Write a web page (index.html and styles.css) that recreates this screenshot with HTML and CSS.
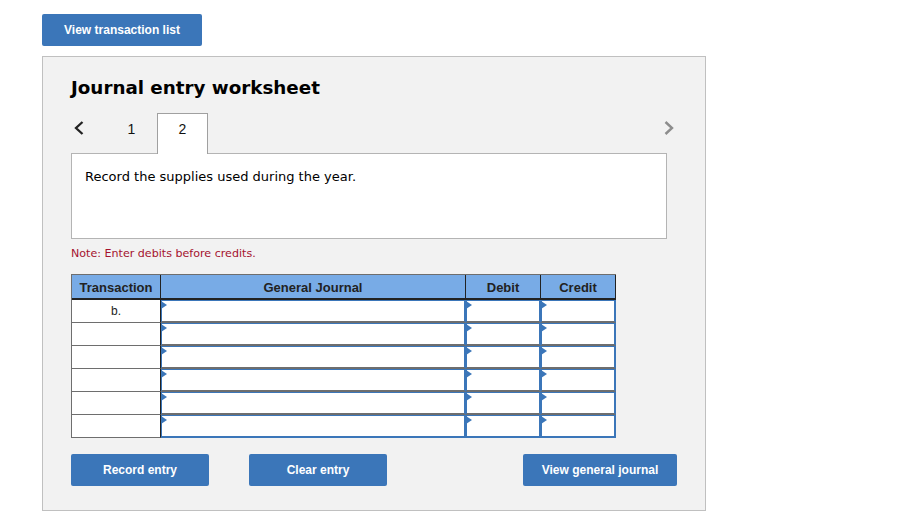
FILE: index.html
```html
<!DOCTYPE html>
<html>
<head>
    <meta charset="utf-8" />
    <title>Journal entry worksheet</title>
    <link rel="stylesheet" href="styles.css">
</head>
<body>
    <button class="btn btn_list">View transaction list</button>
    <div class="panel">
        <h1>Journal entry worksheet</h1>
        <div class="tabs">
            <svg class="arrow arrow_prev" width="10" height="14" viewBox="0 0 10 14"><path d="M8.5 1 L2 7 L8.5 13" /></svg>
            <span class="tab">1</span>
            <span class="tab tab_active">2</span>
            <svg class="arrow arrow_next" width="10" height="14" viewBox="0 0 10 14"><path d="M1.5 1 L8 7 L1.5 13" /></svg>
        </div>
        <div class="desc">Record the supplies used during the year.</div>
        <p class="note">Note: Enter debits before credits.</p>
        <table class="journal">
            <tr>
                <th class="col_trans">Transaction</th>
                <th class="col_acct">General Journal</th>
                <th class="col_amt">Debit</th>
                <th class="col_amt">Credit</th>
            </tr>
            <tr><td class="trans">b.</td><td class="entry"></td><td class="entry"></td><td class="entry"></td></tr>
            <tr><td class="trans"></td><td class="entry"></td><td class="entry"></td><td class="entry"></td></tr>
            <tr><td class="trans"></td><td class="entry"></td><td class="entry"></td><td class="entry"></td></tr>
            <tr><td class="trans"></td><td class="entry"></td><td class="entry"></td><td class="entry"></td></tr>
            <tr><td class="trans"></td><td class="entry"></td><td class="entry"></td><td class="entry"></td></tr>
            <tr><td class="trans"></td><td class="entry"></td><td class="entry"></td><td class="entry"></td></tr>
        </table>
        <div class="actions">
            <button class="btn btn_entry">Record entry</button>
            <button class="btn btn_entry">Clear entry</button>
            <button class="btn btn_journal">View general journal</button>
        </div>
    </div>
</body>
</html>
```
FILE: styles.css
```css
*
{
    margin: 0;
    padding: 0;
    box-sizing: border-box;
}

body
{
    padding: 14px 0 0 42px;
    background: #fff;
    font-family: "Liberation Sans", Arial, sans-serif;
    color: #000;
}

.btn
{
    display: block;
    height: 32px;
    border: 0;
    border-radius: 2px;
    background: #3b76b9;
    color: #fff;
    font-family: "Liberation Sans", Arial, sans-serif;
    font-size: 12px;
    font-weight: bold;
}

.btn_list
{
    width: 160px;
}

.panel
{
    position: relative;
    width: 664px;
    height: 455px;
    margin-top: 10px;
    padding: 20px 28px 0;
    border: 1px solid #c0c0c0;
    background: #f2f2f2;
}

h1
{
    font-family: "DejaVu Sans", Verdana, sans-serif;
    font-size: 18.3px;
    font-weight: bold;
    line-height: 22px;
}

.tabs
{
    position: relative;
    display: flex;
    width: 596px;
    height: 41px;
    margin-top: 14px;
    padding-left: 35px;
}

.tab
{
    width: 51px;
    height: 41px;
    padding-top: 8px;
    font-size: 14px;
    line-height: 16px;
    text-align: center;
    color: #111;
}

.tab_active
{
    position: relative;
    height: 41px;
    padding-top: 7px;
    border: 1px solid #a0a0a0;
    border-bottom: 0;
    background: #fff;
    z-index: 1;
}

.arrow
{
    position: absolute;
    top: 8px;
    fill: none;
}

.arrow_prev
{
    left: 3px;
    stroke: #222;
    stroke-width: 2.3;
}

.arrow_next
{
    right: -7px;
    stroke: #8d8d8d;
    stroke-width: 2.4;
}

.desc
{
    width: 596px;
    height: 86px;
    margin-top: -1px;
    padding: 15px 13px;
    border: 1px solid #b4b4b4;
    background: #fff;
    font-family: "DejaVu Sans", Verdana, sans-serif;
    font-size: 13px;
    line-height: 16px;
}

.note
{
    margin-top: 8px;
    font-family: "DejaVu Sans", Verdana, sans-serif;
    font-size: 11.1px;
    line-height: 14px;
    color: #a5122f;
}

.journal
{
    width: 545px;
    margin-top: 13px;
    border-collapse: separate;
    border-spacing: 0;
    table-layout: fixed;
    border-top: 1px solid #6e6e6e;
    border-left: 1px solid #6e6e6e;
    background: #fff;
}

.journal th
{
    height: 25px;
    padding-top: 1px;
    background: #78abe6;
    border-right: 1px solid #222;
    border-bottom: 2px solid #222;
    font-size: 13px;
    font-weight: bold;
    color: #222;
    text-align: center;
}

.col_trans
{
    width: 89px;
}

.col_acct
{
    width: 305px;
}

.col_amt
{
    width: 75px;
}

.journal td
{
    height: 23px;
}

.journal .trans
{
    border-right: 1px solid #222;
    border-bottom: 1px solid #6e6e6e;
    font-size: 12px;
    text-align: center;
    color: #222;
}

.journal .entry
{
    position: relative;
    border-top: 1px solid #3b76b9;
    border-bottom: 2px solid #6e6e6e;
    border-left: 1px solid #3b76b9;
    border-right: 2px solid #3b76b9;
}

.journal tr:last-child .entry
{
    border-bottom: 2px solid #3b76b9;
}

.entry::before
{
    content: "";
    position: absolute;
    top: 0;
    left: -1px;
    border-left: 6px solid #3b76b9;
    border-top: 4px solid transparent;
    border-bottom: 4px solid transparent;
}

.actions
{
    display: flex;
    width: 606px;
    margin-top: 16px;
}

.actions .btn_entry
{
    width: 138px;
    margin-right: 40px;
}

.actions .btn_journal
{
    width: 154px;
    margin-left: auto;
}
```
